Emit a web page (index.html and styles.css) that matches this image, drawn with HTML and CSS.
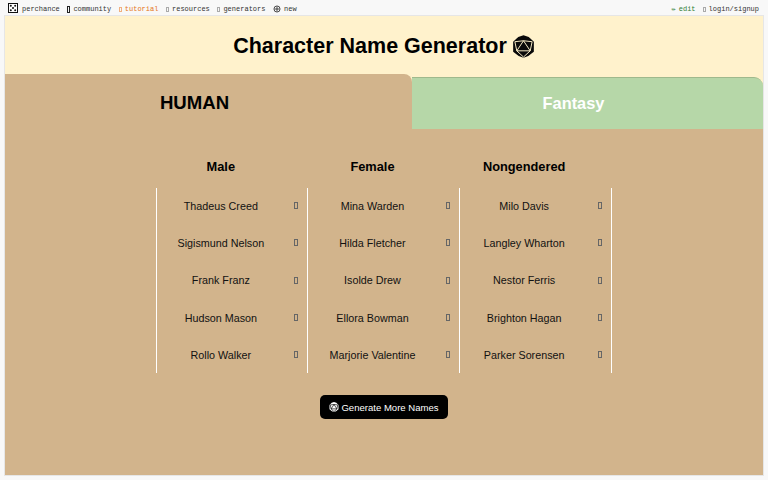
FILE: index.html
```html
<!DOCTYPE html>
<html lang="en">
<head>
<meta charset="utf-8">
<title>Character Name Generator</title>
<link rel="stylesheet" href="styles.css">
</head>
<body>
<nav class="topbar">
  <div class="nav-group">
    <a class="nav-item"><svg class="die" viewBox="0 0 10 10"><rect x="0.5" y="0.5" width="9" height="9" fill="#fff" stroke="#111"/><circle cx="2.8" cy="2.8" r="1" fill="#111"/><circle cx="7.2" cy="2.8" r="1" fill="#111"/><circle cx="5" cy="5" r="1" fill="#111"/><circle cx="2.8" cy="7.2" r="1" fill="#111"/><circle cx="7.2" cy="7.2" r="1" fill="#111"/></svg>perchance</a>
    <a class="nav-item"><span class="tofu tofu-nav"></span>community</a>
    <a class="nav-item orange"><span class="tofu tofu-small"></span>tutorial</a>
    <a class="nav-item"><span class="tofu tofu-small"></span>resources</a>
    <a class="nav-item"><span class="tofu tofu-small"></span>generators</a>
    <a class="nav-item"><svg class="globe" viewBox="0 0 10 10"><circle cx="5" cy="5" r="3.8" fill="none" stroke="#222" stroke-width="1"/><path d="M5 2v6M2 5h6" stroke="#222" stroke-width="1"/></svg>new</a>
  </div>
  <div class="nav-group nav-right">
    <a class="nav-item green"><span class="pencil">✏</span>edit</a>
    <a class="nav-item"><span class="tofu tofu-small"></span>login/signup</a>
  </div>
</nav>
<main class="card">
  <header class="title-band">
    <h1>Character Name Generator <svg class="d20" viewBox="0 0 24 24"><path d="M12 .2 17.5 2 22.8 7V17.5L17 22 12 23.8 7 22 1.2 17.5V7L6.5 2Z" fill="#0a0a0a"/><path d="M12 6 19 16.5H5ZM12 6 3 7M12 6 21 7M3 7 5 16.5M21 7 19 16.5M5 16.5 12 23M19 16.5 12 23" fill="none" stroke="#fff2cc" stroke-width="1"/></svg></h1>
  </header>
  <div class="tabs">
    <div class="tab tab-active">HUMAN</div>
    <div class="tab tab-other">Fantasy</div>
  </div>
  <section class="panel">
    <table class="names">
      <thead>
        <tr><th>Male</th><th>Female</th><th>Nongendered</th></tr>
      </thead>
      <tbody>
        <tr><td><span class="name">Thadeus Creed<span class="tofu"></span></span></td><td><span class="name">Mina Warden<span class="tofu"></span></span></td><td><span class="name">Milo Davis<span class="tofu"></span></span></td></tr>
        <tr><td><span class="name">Sigismund Nelson<span class="tofu"></span></span></td><td><span class="name">Hilda Fletcher<span class="tofu"></span></span></td><td><span class="name">Langley Wharton<span class="tofu"></span></span></td></tr>
        <tr><td><span class="name">Frank Franz<span class="tofu"></span></span></td><td><span class="name">Isolde Drew<span class="tofu"></span></span></td><td><span class="name">Nestor Ferris<span class="tofu"></span></span></td></tr>
        <tr><td><span class="name">Hudson Mason<span class="tofu"></span></span></td><td><span class="name">Ellora Bowman<span class="tofu"></span></span></td><td><span class="name">Brighton Hagan<span class="tofu"></span></span></td></tr>
        <tr><td><span class="name">Rollo Walker<span class="tofu"></span></span></td><td><span class="name">Marjorie Valentine<span class="tofu"></span></span></td><td><span class="name">Parker Sorensen<span class="tofu"></span></span></td></tr>
      </tbody>
    </table>
    <button class="generate"><svg class="d20-small" viewBox="0 0 24 24"><path d="M12 .2 17.5 2 22.8 7V17.5L17 22 12 23.8 7 22 1.2 17.5V7L6.5 2Z" fill="#fff"/><path d="M12 6 19 16.5H5ZM12 6 3 7M12 6 21 7M3 7 5 16.5M21 7 19 16.5M5 16.5 12 23M19 16.5 12 23" fill="none" stroke="#000" stroke-width="1.6"/></svg>Generate More Names</button>
  </section>
</main>
</body>
</html>
```
FILE: styles.css
```css
* { box-sizing: border-box; }
html, body { margin: 0; height: 480px; overflow: hidden; }
body { background: #f8f8f8; font-family: "Liberation Sans", Arial, sans-serif; color: #000; }

.topbar {
  height: 16px;
  display: flex;
  justify-content: space-between;
  align-items: center;
  padding: 2px 9px 0 8px;
  font-family: "Liberation Mono", monospace;
  font-size: 7px;
  color: #333;
}
.nav-group { display: flex; align-items: center; gap: 7.6px; }
.nav-right { gap: 7px; }
.nav-item { display: flex; align-items: center; gap: 3px; white-space: nowrap; }
.orange { color: #e5761c; }
.green { color: #2e7d32; }
.die { width: 10px; height: 10px; margin: -2px 1px 0 0; }
.globe { width: 8px; height: 8px; }
.pencil { font-size: 7px; line-height: 7px; }

.card {
  margin: 0 5px;
  height: 459px;
  background: #d2b48c;
  display: flex;
  flex-direction: column;
  box-shadow: 0 0 0 1px #e6e6e6;
}
.title-band {
  height: 58px;
  padding-top: 2px;
  background: #fff2cc;
  display: flex;
  align-items: center;
  justify-content: center;
}
h1 {
  margin: 0;
  font-size: 21.5px;
  line-height: 26px;
  font-weight: 700;
  display: flex;
  align-items: center;
  gap: 5px;
}
.d20 { width: 23px; height: 23px; flex: none; }

.tabs { display: flex; height: 55px; background: #fff2cc; align-items: flex-end; }
.tab {
  display: flex;
  align-items: center;
  justify-content: center;
  padding-right: 28px;
  font-weight: 700;
}
.tab-active {
  width: 407px;
  height: 55px;
  padding-top: 2px;
  background: #d2b48c;
  border-radius: 0 8px 0 0;
  font-size: 18.6px;
}
.tab-other {
  flex: 1;
  height: 52px;
  background: #b6d7a8;
  border-top: 1px solid #9fb98c;
  border-radius: 0 9px 0 0;
  color: #fff;
  font-size: 16.4px;
}

.panel {
  flex: 1;
  display: flex;
  flex-direction: column;
  align-items: center;
  padding-top: 19px;
}
.names {
  margin-left: -1px;
  border-collapse: collapse;
  table-layout: fixed;
  width: 456px;
}
.names th {
  height: 40px;
  padding: 0 22px 4px 0;
  font-size: 12.8px;
  font-weight: 700;
  text-align: center;
}
.names td {
  height: 37px;
  padding: 0 0 2px;
  border-left: 1.5px solid #fff;
  border-right: 1.5px solid #fff;
  font-size: 10.75px;
}
.names tr:nth-child(3) td { padding-bottom: 1px; }
.names tr:nth-child(n+4) td { padding-bottom: 0; }
.name { display: block; position: relative; text-align: center; padding-right: 22px; color: #111; }
.tofu {
  position: absolute;
  right: 9px;
  top: 50%;
  margin-top: -3.5px;
  width: 4px;
  height: 7px;
  border: 1px solid #666;
}
.nav-item .tofu { position: static; margin: 0; }
.nav-item .tofu-small { width: 3px; height: 5px; border-color: #aaa; }
.orange .tofu-small { border-color: #f0b080; }
.nav-item .tofu-nav { width: 3px; height: 7px; border-color: #222; }

.generate {
  margin-top: 22px;
  width: 128px;
  height: 24px;
  background: #000;
  color: #fff;
  border: 0;
  border-radius: 5px;
  font-family: "Liberation Sans", Arial, sans-serif;
  font-size: 9.55px;
  display: flex;
  align-items: center;
  justify-content: center;
  gap: 2px;
  padding: 0;
}
.d20-small { width: 10px; height: 10px; flex: none; }
```
